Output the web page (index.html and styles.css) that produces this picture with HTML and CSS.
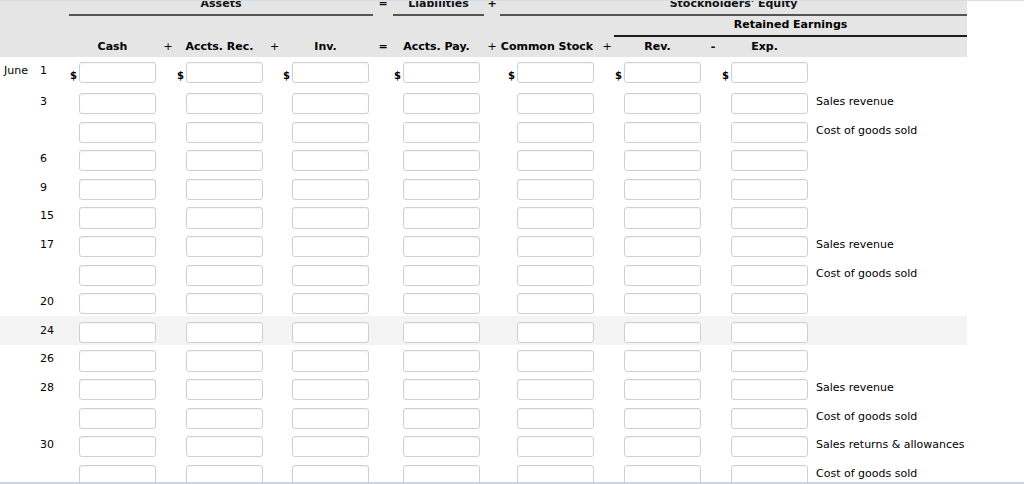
FILE: index.html
```html
<!DOCTYPE html>
<html>
<head>
<meta charset="utf-8">
<title>Accounting equation worksheet</title>
<link rel="stylesheet" href="styles.css">
</head>
<body>
<div class="frame">
  <div class="sheet">
    <div class="head">
      <div class="grid ha">
        <div class="blank"></div>
        <div class="grp g-assets">Assets</div>
        <div class="op">=</div>
        <div class="grp g-liab">Liabilities</div>
        <div class="op">+</div>
        <div class="grp g-se">Stockholders' Equity</div>
      </div>
      <div class="grid hb">
        <div class="pre"></div>
        <div class="re">Retained Earnings</div>
      </div>
      <div class="grid hc">
        <div class="blank"></div>
        <div class="h">Cash</div>
        <div class="op">+</div>
        <div class="h">Accts. Rec.</div>
        <div class="op">+</div>
        <div class="h">Inv.</div>
        <div class="op eq">=</div>
        <div class="h">Accts. Pay.</div>
        <div class="op">+</div>
        <div class="h cs">Common Stock</div>
        <div class="op">+</div>
        <div class="h">Rev.</div>
        <div class="op eq">-</div>
        <div class="h">Exp.</div>
        <div class="blank"></div>
      </div>
    </div>

    <div class="grid row first">
      <div class="date"><span class="mon">June</span><span class="day">1</span></div>
      <div class="val v1"><span class="cur">$</span><input class="box" type="text"></div>
      <div class="val v2"><span class="cur">$</span><input class="box" type="text"></div>
      <div class="val v3"><span class="cur">$</span><input class="box" type="text"></div>
      <div class="val v4"><span class="cur">$</span><input class="box" type="text"></div>
      <div class="val v5"><span class="cur">$</span><input class="box" type="text"></div>
      <div class="val v6"><span class="cur">$</span><input class="box" type="text"></div>
      <div class="val v7"><span class="cur">$</span><input class="box" type="text"></div>
      <div class="lbl"></div>
    </div>

    <div class="grid row">
      <div class="date"><span class="mon"></span><span class="day">3</span></div>
      <div class="val v1"><input class="box" type="text"></div>
      <div class="val v2"><input class="box" type="text"></div>
      <div class="val v3"><input class="box" type="text"></div>
      <div class="val v4"><input class="box" type="text"></div>
      <div class="val v5"><input class="box" type="text"></div>
      <div class="val v6"><input class="box" type="text"></div>
      <div class="val v7"><input class="box" type="text"></div>
      <div class="lbl">Sales revenue</div>
    </div>

    <div class="grid row">
      <div class="date"><span class="mon"></span><span class="day"></span></div>
      <div class="val v1"><input class="box" type="text"></div>
      <div class="val v2"><input class="box" type="text"></div>
      <div class="val v3"><input class="box" type="text"></div>
      <div class="val v4"><input class="box" type="text"></div>
      <div class="val v5"><input class="box" type="text"></div>
      <div class="val v6"><input class="box" type="text"></div>
      <div class="val v7"><input class="box" type="text"></div>
      <div class="lbl">Cost of goods sold</div>
    </div>

    <div class="grid row">
      <div class="date"><span class="mon"></span><span class="day">6</span></div>
      <div class="val v1"><input class="box" type="text"></div>
      <div class="val v2"><input class="box" type="text"></div>
      <div class="val v3"><input class="box" type="text"></div>
      <div class="val v4"><input class="box" type="text"></div>
      <div class="val v5"><input class="box" type="text"></div>
      <div class="val v6"><input class="box" type="text"></div>
      <div class="val v7"><input class="box" type="text"></div>
      <div class="lbl"></div>
    </div>

    <div class="grid row">
      <div class="date"><span class="mon"></span><span class="day">9</span></div>
      <div class="val v1"><input class="box" type="text"></div>
      <div class="val v2"><input class="box" type="text"></div>
      <div class="val v3"><input class="box" type="text"></div>
      <div class="val v4"><input class="box" type="text"></div>
      <div class="val v5"><input class="box" type="text"></div>
      <div class="val v6"><input class="box" type="text"></div>
      <div class="val v7"><input class="box" type="text"></div>
      <div class="lbl"></div>
    </div>

    <div class="grid row">
      <div class="date"><span class="mon"></span><span class="day">15</span></div>
      <div class="val v1"><input class="box" type="text"></div>
      <div class="val v2"><input class="box" type="text"></div>
      <div class="val v3"><input class="box" type="text"></div>
      <div class="val v4"><input class="box" type="text"></div>
      <div class="val v5"><input class="box" type="text"></div>
      <div class="val v6"><input class="box" type="text"></div>
      <div class="val v7"><input class="box" type="text"></div>
      <div class="lbl"></div>
    </div>

    <div class="grid row">
      <div class="date"><span class="mon"></span><span class="day">17</span></div>
      <div class="val v1"><input class="box" type="text"></div>
      <div class="val v2"><input class="box" type="text"></div>
      <div class="val v3"><input class="box" type="text"></div>
      <div class="val v4"><input class="box" type="text"></div>
      <div class="val v5"><input class="box" type="text"></div>
      <div class="val v6"><input class="box" type="text"></div>
      <div class="val v7"><input class="box" type="text"></div>
      <div class="lbl">Sales revenue</div>
    </div>

    <div class="grid row">
      <div class="date"><span class="mon"></span><span class="day"></span></div>
      <div class="val v1"><input class="box" type="text"></div>
      <div class="val v2"><input class="box" type="text"></div>
      <div class="val v3"><input class="box" type="text"></div>
      <div class="val v4"><input class="box" type="text"></div>
      <div class="val v5"><input class="box" type="text"></div>
      <div class="val v6"><input class="box" type="text"></div>
      <div class="val v7"><input class="box" type="text"></div>
      <div class="lbl">Cost of goods sold</div>
    </div>

    <div class="grid row">
      <div class="date"><span class="mon"></span><span class="day">20</span></div>
      <div class="val v1"><input class="box" type="text"></div>
      <div class="val v2"><input class="box" type="text"></div>
      <div class="val v3"><input class="box" type="text"></div>
      <div class="val v4"><input class="box" type="text"></div>
      <div class="val v5"><input class="box" type="text"></div>
      <div class="val v6"><input class="box" type="text"></div>
      <div class="val v7"><input class="box" type="text"></div>
      <div class="lbl"></div>
    </div>

    <div class="grid row alt">
      <div class="date"><span class="mon"></span><span class="day">24</span></div>
      <div class="val v1"><input class="box" type="text"></div>
      <div class="val v2"><input class="box" type="text"></div>
      <div class="val v3"><input class="box" type="text"></div>
      <div class="val v4"><input class="box" type="text"></div>
      <div class="val v5"><input class="box" type="text"></div>
      <div class="val v6"><input class="box" type="text"></div>
      <div class="val v7"><input class="box" type="text"></div>
      <div class="lbl"></div>
    </div>

    <div class="grid row">
      <div class="date"><span class="mon"></span><span class="day">26</span></div>
      <div class="val v1"><input class="box" type="text"></div>
      <div class="val v2"><input class="box" type="text"></div>
      <div class="val v3"><input class="box" type="text"></div>
      <div class="val v4"><input class="box" type="text"></div>
      <div class="val v5"><input class="box" type="text"></div>
      <div class="val v6"><input class="box" type="text"></div>
      <div class="val v7"><input class="box" type="text"></div>
      <div class="lbl"></div>
    </div>

    <div class="grid row">
      <div class="date"><span class="mon"></span><span class="day">28</span></div>
      <div class="val v1"><input class="box" type="text"></div>
      <div class="val v2"><input class="box" type="text"></div>
      <div class="val v3"><input class="box" type="text"></div>
      <div class="val v4"><input class="box" type="text"></div>
      <div class="val v5"><input class="box" type="text"></div>
      <div class="val v6"><input class="box" type="text"></div>
      <div class="val v7"><input class="box" type="text"></div>
      <div class="lbl">Sales revenue</div>
    </div>

    <div class="grid row">
      <div class="date"><span class="mon"></span><span class="day"></span></div>
      <div class="val v1"><input class="box" type="text"></div>
      <div class="val v2"><input class="box" type="text"></div>
      <div class="val v3"><input class="box" type="text"></div>
      <div class="val v4"><input class="box" type="text"></div>
      <div class="val v5"><input class="box" type="text"></div>
      <div class="val v6"><input class="box" type="text"></div>
      <div class="val v7"><input class="box" type="text"></div>
      <div class="lbl">Cost of goods sold</div>
    </div>

    <div class="grid row">
      <div class="date"><span class="mon"></span><span class="day">30</span></div>
      <div class="val v1"><input class="box" type="text"></div>
      <div class="val v2"><input class="box" type="text"></div>
      <div class="val v3"><input class="box" type="text"></div>
      <div class="val v4"><input class="box" type="text"></div>
      <div class="val v5"><input class="box" type="text"></div>
      <div class="val v6"><input class="box" type="text"></div>
      <div class="val v7"><input class="box" type="text"></div>
      <div class="lbl">Sales returns &amp; allowances</div>
    </div>

    <div class="grid row">
      <div class="date"><span class="mon"></span><span class="day"></span></div>
      <div class="val v1"><input class="box" type="text"></div>
      <div class="val v2"><input class="box" type="text"></div>
      <div class="val v3"><input class="box" type="text"></div>
      <div class="val v4"><input class="box" type="text"></div>
      <div class="val v5"><input class="box" type="text"></div>
      <div class="val v6"><input class="box" type="text"></div>
      <div class="val v7"><input class="box" type="text"></div>
      <div class="lbl">Cost of goods sold</div>
    </div>
  </div>
</div>
</body>
</html>
```

FILE: styles.css
```css
html, body {
  margin: 0;
  padding: 0;
  background: #ffffff;
}

body {
  font-family: "DejaVu Sans", Verdana, sans-serif;
  font-size: 11px;
  color: #000000;
}

.frame {
  height: 484px;
  box-sizing: border-box;
  border-top: 1px solid #d5dce5;
  border-bottom: 2px solid #cdd5e0;
  overflow: hidden;
}

.sheet {
  width: 967px;
  margin-top: -10px;
}

.grid {
  display: grid;
  grid-template-columns: 69px 91px 16px 91px 15px 91px 20px 91px 16px 100px 14px 91px 16px 91px 155px;
}

.head {
  background: #e5e5e5;
}

/* header row A: groups */
.ha > div {
  padding: 5.5px 0 4.5px;
  line-height: 13px;
  text-align: center;
  font-weight: bold;
  color: #111;
}
.ha .grp {
  border-bottom: 2px solid #555555;
}
.ha .g-assets { grid-column: 2 / 7; }
.ha .g-liab { grid-column: 8 / 9; }
.ha .g-se { grid-column: 10 / 16; }

/* header row B */
.hb > div {
  padding: 2px 0 4px;
  line-height: 13px;
  font-weight: bold;
  text-align: center;
}
.hb .pre { grid-column: 1 / 12; }
.hb .re {
  grid-column: 12 / 16;
  border-bottom: 2px solid #1c1c1c;
}

/* header row C */
.hc > div {
  padding: 2.5px 0 4.5px;
  line-height: 13px;
  text-align: center;
  font-weight: bold;
}
.hc .h { padding-right: 4px; }
.hc .h.cs { padding-right: 6px; }
.hc .op { font-weight: normal; }
.hc .op.eq { font-weight: bold; }

/* body rows */
.row {
  height: 28.6px;
  box-sizing: border-box;
  padding-top: 5.3px;
  align-items: start;
}
.row.first {
  height: 30.7px;
  padding-top: 4.7px;
}
.row.alt {
  background: #f4f4f4;
}

.date {
  grid-column: 1;
  display: flex;
  padding-left: 4px;
  line-height: 18px;
  color: #000;
}
.mon { width: 36px; }

.val {
  display: flex;
  justify-content: flex-end;
  align-items: flex-end;
  padding-right: 4px;
}
.v1 { grid-column: 2; }
.v2 { grid-column: 4; }
.v3 { grid-column: 6; }
.v4 { grid-column: 8; }
.v5 { grid-column: 10; padding-right: 6px; }
.v6 { grid-column: 12; }
.v7 { grid-column: 14; }

.lbl {
  grid-column: 15;
  padding-left: 4px;
  line-height: 18px;
  white-space: nowrap;
  color: #000;
}

.cur {
  font-size: 10px;
  font-weight: bold;
  line-height: 12px;
  margin-right: 2px;
  margin-bottom: 1px;
}

input.box {
  width: 77px;
  height: 21.3px;
  box-sizing: border-box;
  margin: 0;
  padding: 0 3px;
  border: 1px solid #cfcfcf;
  border-radius: 3px;
  background: #ffffff;
  font: inherit;
  box-shadow: inset 0 1px 1px rgba(0, 0, 0, 0.04);
  outline: none;
}
```
